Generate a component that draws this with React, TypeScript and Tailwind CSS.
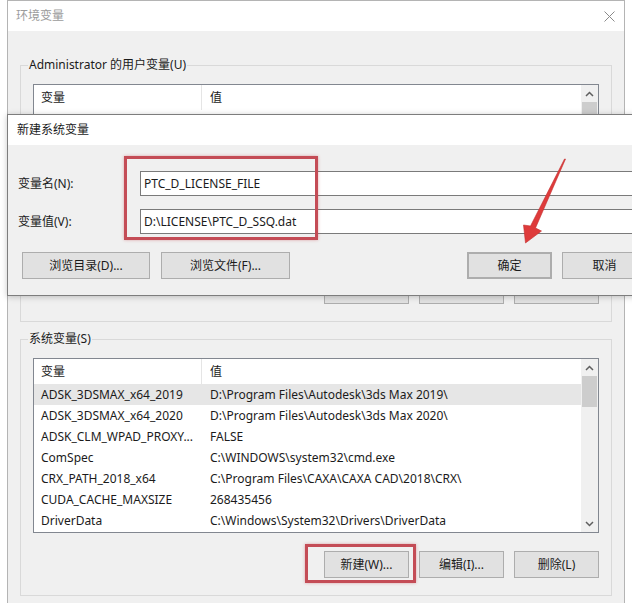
import type { ReactNode } from "react";

const SYSTEM_ROWS = [
  ["ADSK_3DSMAX_x64_2019", "D:\\Program Files\\Autodesk\\3ds Max 2019\\"],
  ["ADSK_3DSMAX_x64_2020", "D:\\Program Files\\Autodesk\\3ds Max 2020\\"],
  ["ADSK_CLM_WPAD_PROXY...", "FALSE"],
  ["ComSpec", "C:\\WINDOWS\\system32\\cmd.exe"],
  ["CRX_PATH_2018_x64", "C:\\Program Files\\CAXA\\CAXA CAD\\2018\\CRX\\"],
  ["CUDA_CACHE_MAXSIZE", "268435456"],
  ["DriverData", "C:\\Windows\\System32\\Drivers\\DriverData"],
];

function Chevron({ down }: { down?: boolean }) {
  return (
    <svg width="9" height="6" viewBox="0 0 9 6" className={down ? "rotate-180" : ""}>
      <path d="M1 5 L4.5 1.5 L8 5" fill="none" stroke="#5f5f5f" strokeWidth="1.5" />
    </svg>
  );
}

function ListView({ rows, selected }: { rows: string[][]; selected?: number }) {
  return (
    <div className="mt-[11px] flex h-[175px] border border-[#828790] bg-white">
      <div className="flex flex-1 flex-col overflow-hidden">
        <div className="flex h-[25px] shrink-0 items-center">
          <div className="flex h-full w-[168px] items-center border-r border-[#e5e5e5] pl-[7px]">变量</div>
          <div className="pl-[8px]">值</div>
        </div>
        {rows.map(([name, value], i) => (
          <div
            key={name}
            className={`flex h-[21px] shrink-0 items-center whitespace-nowrap ${i === selected ? "bg-[#e6e6e6]" : ""}`}
          >
            <div className="w-[168px] shrink-0 pl-[7px]">{name}</div>
            <div className="pl-[8px]">{value}</div>
          </div>
        ))}
      </div>
      <div className="flex w-[17px] flex-col bg-[#f0f0f0]">
        <div className="flex h-[17px] items-center justify-center">
          <Chevron />
        </div>
        <div className="mx-[1px] h-[31px] bg-[#cdcdcd]" />
        <div className="flex-1" />
        <div className="flex h-[17px] items-center justify-center">
          <Chevron down />
        </div>
      </div>
    </div>
  );
}

function Button({ children, className = "" }: { children?: ReactNode; className?: string }) {
  return (
    <div
      className={`flex h-[27px] shrink-0 items-center justify-center border border-[#adadad] bg-[#e1e1e1] ${className}`}
    >
      {children}
    </div>
  );
}

function GroupBox({ label, children, className = "" }: { label: string; children: ReactNode; className?: string }) {
  return (
    <fieldset className={`border border-[#d9d9d9] px-[12px] pb-[17px] ${className}`}>
      <legend className="ml-[-5px] px-[1px] leading-[16px]">{label}</legend>
      {children}
    </fieldset>
  );
}

// labels are only given where the buttons are not covered by the dialog
function VarButtons({ labels }: { labels?: string[] }) {
  return (
    <div className="mt-[18px] flex justify-end gap-[10px]">
      <Button className="w-[85px]">{labels?.[0]}</Button>
      <Button className="w-[85px]">{labels?.[1]}</Button>
      <Button className="w-[85px]">{labels?.[2]}</Button>
    </div>
  );
}

export default function App() {
  return (
    <div className="relative h-[603px] w-[632px] overflow-hidden bg-white font-[family-name:'Noto_Sans','Noto_Sans_CJK_SC',sans-serif] text-[12px] text-[#1b1b1b]">
      {/* main window: 环境变量 */}
      <div className="ml-[7px] flex h-[640px] w-[618px] flex-col border border-[#b4b4b4] bg-[#f0f0f0]">
        <div className="flex h-[30px] shrink-0 items-center justify-between bg-white pl-[8px] pr-[9px]">
          <span className="text-[#9b9b9b]">环境变量</span>
          <svg width="11" height="11" viewBox="0 0 11 11">
            <path d="M0.5 0.5 L10.5 10.5 M10.5 0.5 L0.5 10.5" stroke="#8a8a8a" strokeWidth="1" />
          </svg>
        </div>
        <div className="flex flex-col px-[12px] pt-[26px]">
          <GroupBox label="Administrator 的用户变量(U)">
            <ListView rows={[]} />
            <VarButtons />
          </GroupBox>
          <GroupBox label="系统变量(S)" className="mt-[9px]">
            <ListView rows={SYSTEM_ROWS} selected={0} />
            <VarButtons labels={["新建(W)...", "编辑(I)...", "删除(L)"]} />
          </GroupBox>
        </div>
      </div>

      {/* dialog: 新建系统变量 */}
      <div className="absolute left-[7px] top-[114px] w-[653px] border border-[#7d7d7d] bg-[#f0f0f0] shadow-[0_1px_6px_rgba(0,0,0,0.22)]">
        <div className="flex h-[30px] items-center bg-white pl-[9px]">新建系统变量</div>
        <div className="flex flex-col gap-[13px] pl-[10px] pr-[12px] pt-[26px]">
          <div className="flex h-[25px] items-center">
            <span className="w-[122px]">变量名(N):</span>
            <div className="flex h-full flex-1 items-center border border-[#7a7a7a] bg-white pl-[3px]">PTC_D_LICENSE_FILE</div>
          </div>
          <div className="flex h-[25px] items-center">
            <span className="w-[122px]">变量值(V):</span>
            <div className="flex h-full flex-1 items-center border border-[#7a7a7a] bg-white pl-[3px]">D:\LICENSE\PTC_D_SSQ.dat</div>
          </div>
        </div>
        <div className="mt-[18px] flex gap-[11px] pb-[16px] pl-[14px] pr-[12px]">
          <Button className="w-[128px]">浏览目录(D)...</Button>
          <Button className="w-[129px]">浏览文件(F)...</Button>
          <div className="ml-auto flex gap-[10px]">
            <Button className="w-[85px] border-2 border-[#2f6f9f]">确定</Button>
            <Button className="w-[85px]">取消</Button>
          </div>
        </div>
      </div>

      {/* annotations */}
      <div className="absolute left-[124px] top-[156px] h-[84px] w-[194px] border-[3px] border-[#c44c56] shadow-[0_0_3px_rgba(200,70,80,0.45)]" />
      <div className="absolute left-[305px] top-[544px] h-[39px] w-[111px] border-[3px] border-[#c44c56] shadow-[0_0_3px_rgba(200,70,80,0.45)]" />
      <svg className="pointer-events-none absolute left-0 top-0" width="632" height="603" viewBox="0 0 632 603">
        <polygon
          points="565.5,159 535.5,228 541.5,231 525.5,243 523.5,225 530.5,226 564.5,159"
          fill="#de3b3b"
          stroke="#c42f2f"
          strokeWidth="0.6"
          strokeLinejoin="round"
        />
      </svg>
    </div>
  );
}
